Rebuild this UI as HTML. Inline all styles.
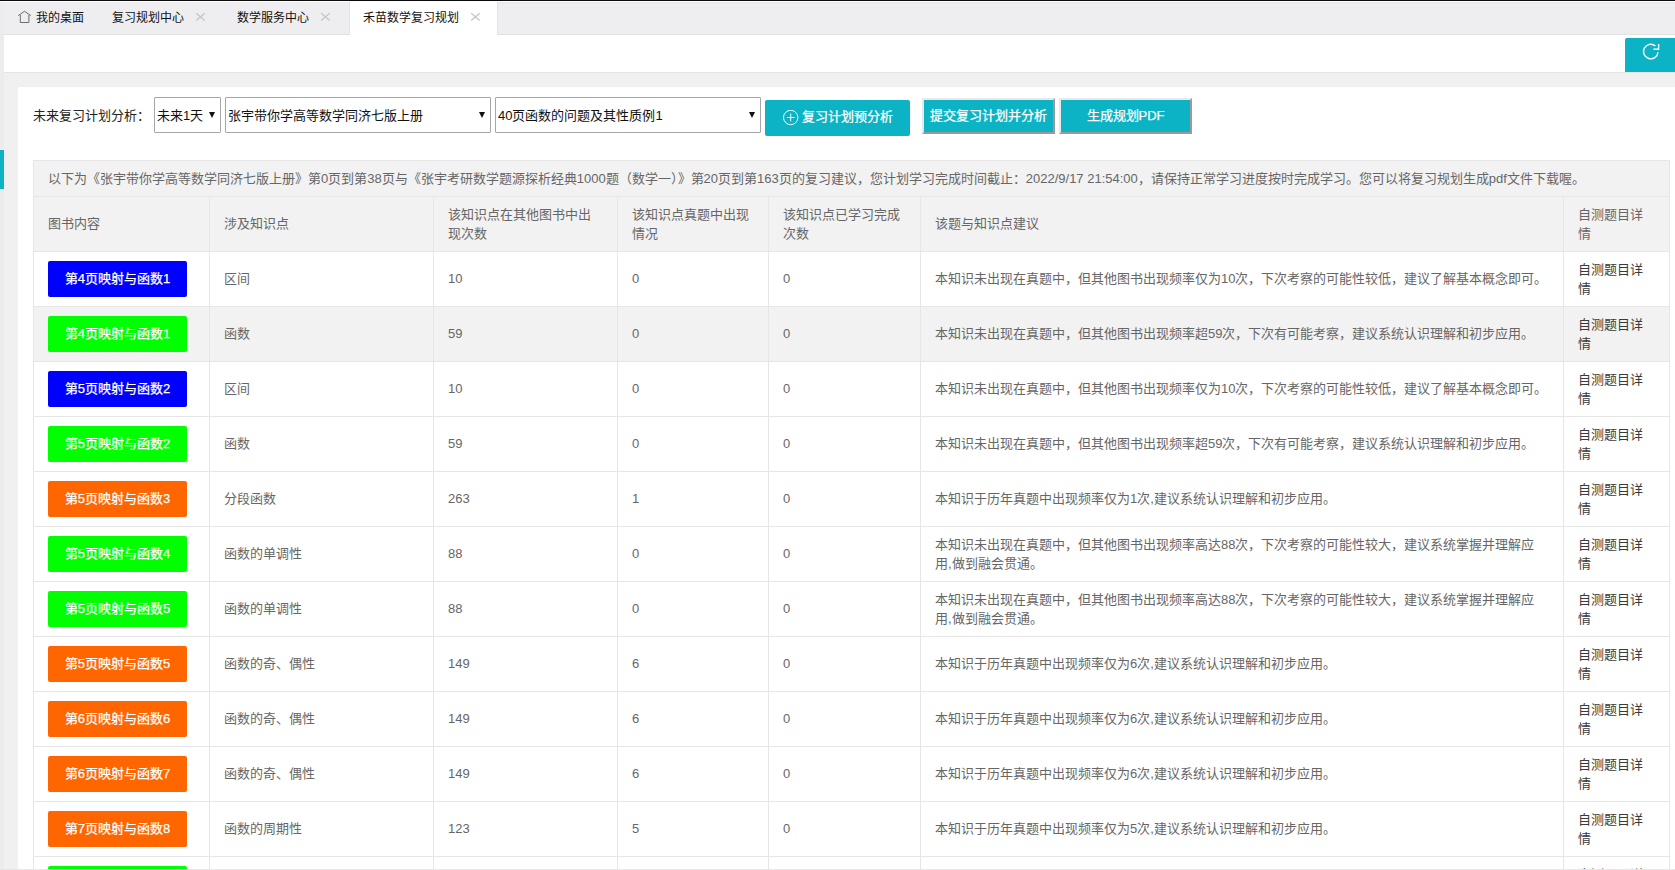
<!DOCTYPE html>
<html lang="zh-CN"><head><meta charset="utf-8">
<style>
*{box-sizing:border-box}
html,body{margin:0;padding:0;width:1675px;height:870px;overflow:hidden;background:#f0f0f0;font-family:"Liberation Sans",sans-serif;}
#topline{position:absolute;left:0;top:0;width:1675px;height:1px;background:#0a0a0a}
#topwhite{position:absolute;left:0;top:1px;width:1675px;height:1px;background:#fff}
#tabbar{position:absolute;left:0;top:2px;width:1675px;height:33px;background:#eeeef0;border-bottom:1px solid #e2e2e4}
.tab{position:absolute;top:0;height:33px;line-height:32px;font-size:12px;color:#111;white-space:nowrap}
.tab .x{position:absolute;top:10px;width:10px;height:10px}
.tab.act{background:#fff;height:33px}
#whitebar{position:absolute;left:4px;top:35px;width:1671px;height:38px;background:#fff;border-bottom:1px solid #e4e4e4}
#refresh{position:absolute;left:1625px;top:38px;width:50px;height:34px;background:#0bb3c4;border-radius:2px 0 0 0}
#lstrip{position:absolute;left:0;top:35px;width:4px;height:835px;background:#ececec}
#tealbar{position:absolute;left:0;top:150px;width:4px;height:39px;background:#0bb3c4}
#panel{position:absolute;left:18px;top:87px;width:1670px;height:782px;background:#fff;border-radius:2px 0 0 0}
#botline{position:absolute;left:0;top:869px;width:1675px;height:1px;background:#e6e6e6;z-index:5}
.lbl{position:absolute;left:33px;top:106px;font-size:13px;line-height:20px;color:#222}
.sel{position:absolute;top:97px;height:36px;border:1px solid #a6a6a6;background:#fff;font-size:13px;line-height:35px;color:#111;padding-left:2px;border-radius:1px}
.sel .ar{position:absolute;top:14px;width:0;height:0;border-left:3px solid transparent;border-right:3px solid transparent;border-top:6px solid #111}
.btn{position:absolute;background:#0bb3c4;color:#fff;font-size:13px;text-align:center;white-space:nowrap;-webkit-text-stroke:0.25px #fff}
#b1{left:765px;top:100px;width:145px;height:36px;border-radius:2px;line-height:34px}
.ob{top:98px;height:36px;border:2px solid;border-color:#e9e9e9 #9a9a9a #9a9a9a #e9e9e9;line-height:32px}
#b2{left:922px;width:133px}
#b3{left:1059px;width:133px}
table{position:absolute;left:33px;top:160px;width:1637px;border-collapse:collapse;table-layout:fixed;font-size:13px;color:#666}
table td,table th{border:1px solid #e6e6e6;padding:0 14px 1px;height:55px;line-height:19px;text-align:left;font-weight:normal;vertical-align:middle}
table .cap td{height:36px;background:#f2f2f2}
tr.hd th{background:#f2f2f2}
tr.hov td{background:#f2f2f2}
.pb{display:inline-block;width:139px;height:36px;line-height:36px;text-align:center;color:#fff;border-radius:2px;vertical-align:middle;-webkit-text-stroke:0.25px #fff}
td.lk{color:#3a3a3a}
</style></head><body>
<div id="topline"></div><div id="topwhite"></div>
<div id="tabbar">
 <div class="tab" style="left:36px"><svg style="position:absolute;left:-20px;top:7px" width="18" height="16" viewBox="0 0 18 16"><path d="M2.2 6.6 L8.5 2.3 L14.8 6.6 M4.3 6 V13.5 H12.9 V6" fill="none" stroke="#6c6c6c" stroke-width="1"/></svg>我的桌面</div>
 <div class="tab" style="left:112px">复习规划中心<svg style="position:absolute;left:83px;top:10px" width="11" height="10" viewBox="0 0 11 10"><path d="M1.2 1.2 L9.7 8.5 M9.7 1.2 L1.2 8.5" stroke="#c4c4c9" stroke-width="1.2"/></svg></div>
 <div class="tab" style="left:237px">数学服务中心<svg style="position:absolute;left:83px;top:10px" width="11" height="10" viewBox="0 0 11 10"><path d="M1.2 1.2 L9.7 8.5 M9.7 1.2 L1.2 8.5" stroke="#c4c4c9" stroke-width="1.2"/></svg></div>
 <div class="tab act" style="left:350px;width:147px;padding-left:13px">禾苗数学复习规划<svg style="position:absolute;left:120px;top:10px" width="11" height="10" viewBox="0 0 11 10"><path d="M1.2 1.2 L9.7 8.5 M9.7 1.2 L1.2 8.5" stroke="#c4c4c9" stroke-width="1.2"/></svg></div>
</div>
<div id="lstrip"></div><div style="position:absolute;left:349px;top:2px;width:1px;height:32px;background:#e4e4e6"></div><div style="position:absolute;left:497px;top:2px;width:1178px;height:1px;background:#e6e6e8"></div><div style="position:absolute;left:497px;top:2px;width:1px;height:32px;background:#e4e4e6"></div><div style="position:absolute;left:0;top:2px;width:4px;height:33px;background:#ececec"></div>
<div id="whitebar"></div>
<div id="refresh"><svg style="position:absolute;left:15px;top:3px" width="22" height="22" viewBox="0 0 22 22"><path d="M18 11.2 A7.3 7.3 0 1 1 15.4 4.9" fill="none" stroke="#fff" stroke-width="1.4"/><path d="M18.6 3 V8.3 H13.4" fill="none" stroke="#fff" stroke-width="1.4"/></svg></div>
<div id="tealbar"></div>
<div id="panel"></div>
<div id="botline"></div>
<div class="lbl">未来复习计划分析：</div>
<div class="sel" style="left:154px;width:67px">未来1天<span class="ar" style="left:54px"></span></div>
<div class="sel" style="left:225px;width:266px">张宇带你学高等数学同济七版上册<span class="ar" style="left:253px"></span></div>
<div class="sel" style="left:495px;width:266px">40页函数的问题及其性质例1<span class="ar" style="left:253px"></span></div>
<div class="btn" id="b1"><svg style="position:absolute;left:18px;top:10px" width="16" height="16" viewBox="0 0 16 16"><circle cx="7.7" cy="7.5" r="7.2" fill="none" stroke="#fff" stroke-width="1"/><path d="M7.7 3.6 V11.4 M3.8 7.5 H11.6" stroke="#fff" stroke-width="1"/></svg><span style="position:absolute;left:37px;top:0">复习计划预分析</span></div>
<div class="btn ob" id="b2">提交复习计划并分析</div>
<div class="btn ob" id="b3">生成规划PDF</div>
<table>
<colgroup><col style="width:176px"><col style="width:224px"><col style="width:184px"><col style="width:151px"><col style="width:152px"><col style="width:643px"><col style="width:106px"></colgroup>
<tbody>
<tr class="cap"><td colspan="7">以下为《张宇带你学高等数学同济七版上册》第0页到第38页与《张宇考研数学题源探析经典1000题（数学一）》第20页到第163页的复习建议，您计划学习完成时间截止：2022/9/17 21:54:00，请保持正常学习进度按时完成学习。您可以将复习规划生成pdf文件下载喔。</td></tr>
<tr class="hd"><th>图书内容</th><th>涉及知识点</th><th>该知识点在其他图书中出现次数</th><th>该知识点真题中出现情况</th><th>该知识点已学习完成次数</th><th>该题与知识点建议</th><th>自测题目详情</th></tr>
<tr><td><span class="pb" style="background:#0000ff">第4页映射与函数1</span></td><td>区间</td><td>10</td><td>0</td><td>0</td><td>本知识未出现在真题中，但其他图书出现频率仅为10次，下次考察的可能性较低，建议了解基本概念即可。</td><td class="lk">自测题目详情</td></tr>
<tr class="hov"><td><span class="pb" style="background:#00ff00">第4页映射与函数1</span></td><td>函数</td><td>59</td><td>0</td><td>0</td><td>本知识未出现在真题中，但其他图书出现频率超59次，下次有可能考察，建议系统认识理解和初步应用。</td><td class="lk">自测题目详情</td></tr>
<tr><td><span class="pb" style="background:#0000ff">第5页映射与函数2</span></td><td>区间</td><td>10</td><td>0</td><td>0</td><td>本知识未出现在真题中，但其他图书出现频率仅为10次，下次考察的可能性较低，建议了解基本概念即可。</td><td class="lk">自测题目详情</td></tr>
<tr><td><span class="pb" style="background:#00ff00">第5页映射与函数2</span></td><td>函数</td><td>59</td><td>0</td><td>0</td><td>本知识未出现在真题中，但其他图书出现频率超59次，下次有可能考察，建议系统认识理解和初步应用。</td><td class="lk">自测题目详情</td></tr>
<tr><td><span class="pb" style="background:#ff6600">第5页映射与函数3</span></td><td>分段函数</td><td>263</td><td>1</td><td>0</td><td>本知识于历年真题中出现频率仅为1次,建议系统认识理解和初步应用。</td><td class="lk">自测题目详情</td></tr>
<tr><td><span class="pb" style="background:#00ff00">第5页映射与函数4</span></td><td>函数的单调性</td><td>88</td><td>0</td><td>0</td><td>本知识未出现在真题中，但其他图书出现频率高达88次，下次考察的可能性较大，建议系统掌握并理解应用,做到融会贯通。</td><td class="lk">自测题目详情</td></tr>
<tr><td><span class="pb" style="background:#00ff00">第5页映射与函数5</span></td><td>函数的单调性</td><td>88</td><td>0</td><td>0</td><td>本知识未出现在真题中，但其他图书出现频率高达88次，下次考察的可能性较大，建议系统掌握并理解应用,做到融会贯通。</td><td class="lk">自测题目详情</td></tr>
<tr><td><span class="pb" style="background:#ff6600">第5页映射与函数5</span></td><td>函数的奇、偶性</td><td>149</td><td>6</td><td>0</td><td>本知识于历年真题中出现频率仅为6次,建议系统认识理解和初步应用。</td><td class="lk">自测题目详情</td></tr>
<tr><td><span class="pb" style="background:#ff6600">第6页映射与函数6</span></td><td>函数的奇、偶性</td><td>149</td><td>6</td><td>0</td><td>本知识于历年真题中出现频率仅为6次,建议系统认识理解和初步应用。</td><td class="lk">自测题目详情</td></tr>
<tr><td><span class="pb" style="background:#ff6600">第6页映射与函数7</span></td><td>函数的奇、偶性</td><td>149</td><td>6</td><td>0</td><td>本知识于历年真题中出现频率仅为6次,建议系统认识理解和初步应用。</td><td class="lk">自测题目详情</td></tr>
<tr><td><span class="pb" style="background:#ff6600">第7页映射与函数8</span></td><td>函数的周期性</td><td>123</td><td>5</td><td>0</td><td>本知识于历年真题中出现频率仅为5次,建议系统认识理解和初步应用。</td><td class="lk">自测题目详情</td></tr>
<tr><td><span class="pb" style="background:#00ff00">第7页映射与函数9</span></td><td>函数的周期性</td><td>123</td><td>0</td><td>0</td><td>本知识于历年真题中出现频率仅为5次,建议系统认识理解和初步应用。</td><td class="lk">自测题目详情</td></tr>
</tbody></table>
</body></html>
